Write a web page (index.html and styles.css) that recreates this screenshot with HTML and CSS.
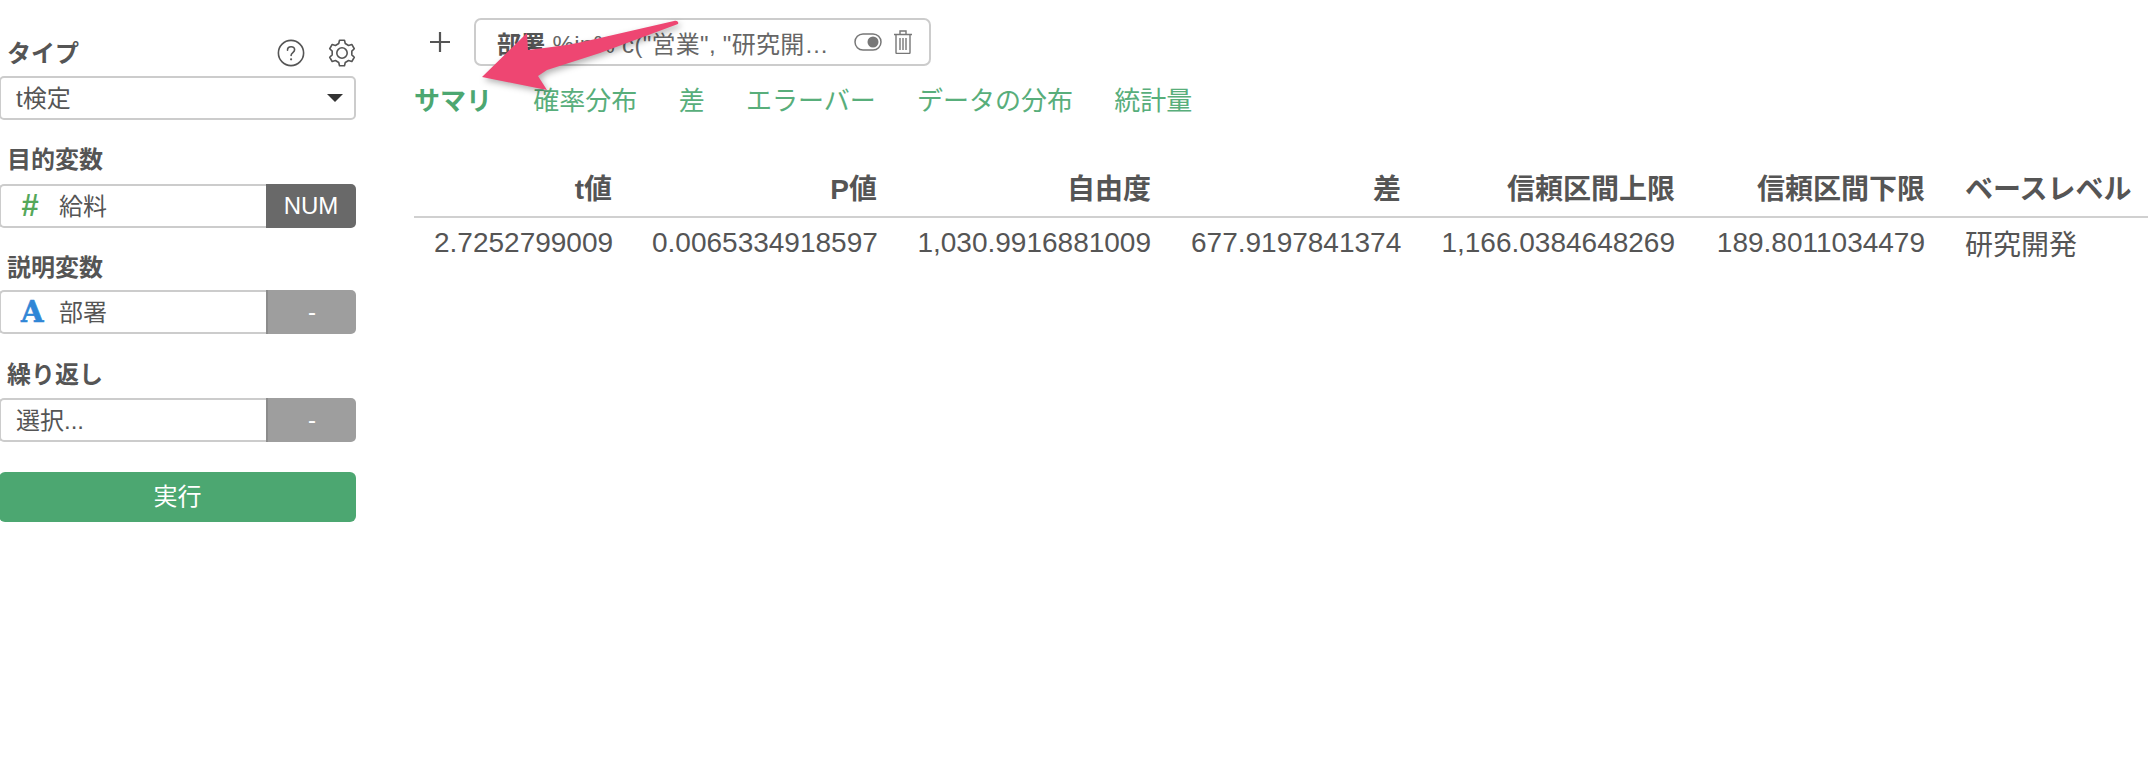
FILE: index.html
```html
<!DOCTYPE html>
<html lang="ja">
<head>
  <meta charset="UTF-8" />
  <title>t検定</title>
  <link rel="stylesheet" href="styles.css">
</head>
<body>
  <div class="page">
    <div class="sidebar">
      <div class="label-row">
        <label>タイプ</label>
        <div class="tools">
          <svg width="28" height="28" viewBox="0 0 28 28" fill="none" stroke="#555" stroke-width="1.6"><circle cx="14" cy="14" r="12.6"/><path d="M10.500 11.200c0-2.100 1.500-3.400 3.600-3.400s3.500 1.200 3.500 3c0 2.800-3.500 2.800-3.500 5.600" stroke-linecap="round"/><circle cx="14.100" cy="20.300" r="1.100" fill="#555" stroke="none"/></svg>
          <svg width="28" height="28" viewBox="0 0 28 28" fill="none" stroke="#555" stroke-width="1.6" stroke-linejoin="round"><circle cx="14" cy="14" r="5.200"/><path d="M10.740 4.540L11.520 1.240H16.480L17.260 4.540L20.560 6.450L23.810 5.470L26.290 9.760L23.820 12.090V15.910L26.290 18.240L23.810 22.530L20.560 21.550L17.260 23.460L16.480 26.760H11.520L10.740 23.460L7.440 21.550L4.190 22.530L1.710 18.240L4.180 15.910V12.090L1.710 9.760L4.190 5.470L7.440 6.450Z"/></svg>
        </div>
      </div>
      <div class="select">
        <span>t検定</span>
        <i class="caret"></i>
      </div>

      <label>目的変数</label>
      <div class="field">
        <div class="field-value"><b class="type-icon num">#</b>給料</div>
        <div class="field-type dark">NUM</div>
      </div>

      <label class="tight">説明変数</label>
      <div class="field">
        <div class="field-value"><b class="type-icon str">A</b>部署</div>
        <div class="field-type">-</div>
      </div>

      <label class="loose">繰り返し</label>
      <div class="field">
        <div class="field-value plain">選択...</div>
        <div class="field-type">-</div>
      </div>

      <button class="run-btn">実行</button>
    </div>

    <div class="main">
      <div class="filter-bar">
        <svg class="add" width="22" height="22" viewBox="0 0 22 22" stroke="#555" stroke-width="2.200"><path d="M11 1v20M1 11h20"/></svg>
        <div class="filter">
          <span class="filter-text"><b>部署</b> %in% c("営業", "研究開…</span>
          <svg width="28" height="18" viewBox="0 0 28 18" fill="none" stroke="#777" stroke-width="1.500"><rect x="1" y="1" width="26" height="16" rx="8"/><circle cx="19" cy="9" r="5.500" fill="#777" stroke="none"/></svg>
          <svg width="20" height="24" viewBox="0 0 20 24" fill="none" stroke="#777" stroke-width="1.400"><path d="M1 4.500h18M7 4.500V1h6v3.500M3 4.500v18a1 1 0 0 0 1 1h12a1 1 0 0 0 1-1v-18M7 8v12M10 8v12M13 8v12"/></svg>
        </div>
      </div>

      <div class="tabs">
        <a class="active">サマリ</a>
        <a>確率分布</a>
        <a>差</a>
        <a>エラーバー</a>
        <a>データの分布</a>
        <a>統計量</a>
      </div>

      <table class="summary">
        <thead>
          <tr>
            <th>t値</th><th>P値</th><th>自由度</th><th>差</th><th>信頼区間上限</th><th>信頼区間下限</th><th class="left">ベースレベル</th>
          </tr>
        </thead>
        <tbody>
          <tr>
            <td>2.7252799009</td><td>0.0065334918597</td><td>1,030.9916881009</td><td>677.9197841374</td><td>1,166.0384648269</td><td>189.8011034479</td><td class="left">研究開発</td>
          </tr>
        </tbody>
      </table>
    </div>
  </div>

  <svg class="arrow" width="240" height="100" viewBox="0 0 240 100">
    <path d="M204 21c3-1 5 1 4 3L130 53 77 70l-9 6 9 14-65-13 45-44 1 17c25-3 48-6 72-12z" fill="#ee4672"/>
  </svg>
</body>
</html>
```
FILE: styles.css
```css
html, body { margin: 0; padding: 0; background: #fff; overflow: hidden; }
body {
  width: 2148px; height: 782px; position: relative; color: #555;
  font-family: "Liberation Sans", "Noto Sans CJK JP", sans-serif;
}
.page { display: flex; align-items: flex-start; }

.sidebar { width: 357px; flex: none; padding-top: 37px; margin-left: -1px; }
.sidebar label { display: block; font-size: 24px; font-weight: bold; line-height: 32px; padding-left: 8px; margin: 24px 0 8px; }
.sidebar label.tight { margin: 24px 0 6px; }
.sidebar label.loose { margin: 25px 0 7px; }
.label-row { display: flex; justify-content: space-between; align-items: center; height: 32px; margin-bottom: 7px; }
.sidebar .label-row label { margin: 2px 0 0; }
.tools { display: flex; gap: 23px; }

.select {
  height: 44px; box-sizing: border-box; border: 2px solid #ccc; border-radius: 5px;
  display: flex; align-items: center; justify-content: space-between;
  padding: 0 11px 4px 15px; font-size: 24px;
}
.caret { border: 8px solid transparent; border-top: 8px solid #333; border-bottom: 0; margin-top: 4px; }

.field { display: flex; height: 44px; }
.field-value {
  flex: 1; box-sizing: border-box; border: 2px solid #ccc; border-right: 0; border-radius: 5px 0 0 5px;
  display: flex; align-items: center; padding: 0 0 4px 20px; font-size: 24px;
}
.field-value.plain { padding-left: 15px; }
.type-icon { width: 38px; font-size: 31px; flex: none; margin-top: 4px; }
.type-icon.num { color: #55a85a; font-style: italic; }
.type-icon.str { color: #2f86d6; font-family: "DejaVu Serif", serif; font-size: 29px; -webkit-text-stroke: .6px #2f86d6; }
.field-type {
  width: 90px; background: #9e9e9e; color: #fff; border-radius: 0 5px 5px 0;
  border-left: 2px solid #8c8c8c; box-sizing: border-box;
  display: flex; align-items: center; justify-content: center; font-size: 24px;
}
.field-type.dark { background: #696969; border-left: 0; }

.run-btn {
  display: block; width: 100%; height: 50px; margin-top: 30px; padding: 0 0 6px; border: 0; border-radius: 6px;
  background: #4ca771; color: #fff; font: 24px "Liberation Sans", "Noto Sans CJK JP", sans-serif;
}

.main { flex: 1; margin-left: 58px; min-width: 0; }
.filter-bar { display: flex; align-items: center; height: 48px; margin-top: 18px; }
.add { margin: 0 23px 0 15px; }
.filter {
  width: 457px; height: 48px; box-sizing: border-box; border: 2px solid #ccc; border-radius: 7px;
  display: flex; align-items: center; gap: 11px; padding: 0 16px 0 21px; font-size: 24px; color: #666;
}
.filter-text { flex: 1; white-space: nowrap; letter-spacing: .3px; }
.filter-text b { color: #555; }

.tabs { display: flex; gap: 41.3px; margin-top: 18px; font-size: 26px; line-height: 34px; color: #58ae7b; }
.tabs .active { font-weight: bold; color: #4ca771; }

.summary { width: 1734px; table-layout: fixed; border-collapse: collapse; margin-top: 41px; font-size: 28px; }
.summary th, .summary td { padding: 0 20px; text-align: right; white-space: nowrap; }
.summary th { height: 55px; padding-bottom: 2px; border-bottom: 2px solid #d0d0d0; }
.summary td { height: 50px; }
.summary th:nth-child(1) { width: 178px; }
.summary th:nth-child(2) { width: 225px; }
.summary th:nth-child(3) { width: 234px; }
.summary th:nth-child(4) { width: 210px; }
.summary th:nth-child(5) { width: 234px; }
.summary th:nth-child(6) { width: 210px; }
.summary .left { text-align: left; }

.arrow { position: absolute; left: 470px; top: 0; filter: drop-shadow(2px 3px 3px rgba(0,0,0,.3)); }
```
